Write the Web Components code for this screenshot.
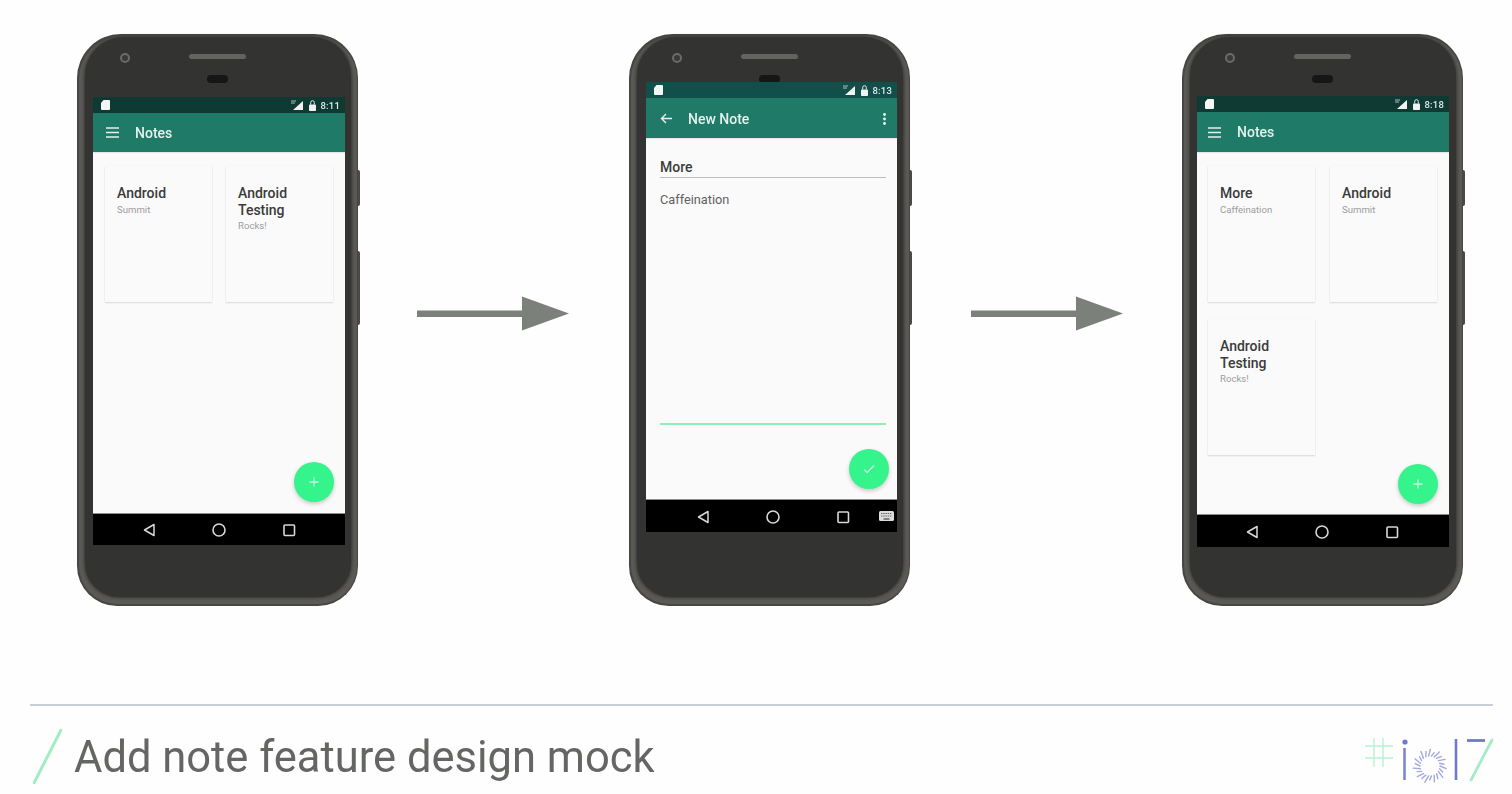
<!DOCTYPE html>
<html lang="en"><head><meta charset="utf-8"><title>Add note feature design mock</title>
<style>
html,body{margin:0;padding:0;background:#fefefe;height:794px;overflow:hidden;font-family:Roboto,"Liberation Sans",sans-serif}
</style></head><body>
<template id="t-slide">
<style>
:host{display:block;width:1512px;height:794px;overflow:hidden;filter:blur(.6px)}
.stage{display:grid;grid-template-columns:281px 271px 281px 272px 281px;justify-content:start;align-items:start;padding:34px 0 0 77px}
.foot{margin:97.500px 19px 0 30px;border-top:2px solid #c6cfda;display:flex;align-items:flex-start}
</style>
<div class="stage"><slot></slot></div>
<div class="foot"><slot name="footer"></slot></div>
</template>

<template id="t-phone">
<style>
:host{display:block;position:relative;width:281px;height:572px;box-sizing:border-box;border-radius:44px 44px 40px 40px;background:#474643;padding:var(--pt) 0 0 var(--pl)}
.ring{position:absolute;inset:1.500px 1.500px 2px;border-radius:43px 43px 38px 38px;background:#5a5955}
.in{position:absolute;inset:3px 7px 9px 8px;border-radius:39px 39px 34px 34px;background:#333332;box-shadow:0 0 3px 1px #383735}
.screen{position:relative;width:var(--sw);height:var(--sh);display:flex;flex-direction:column;overflow:hidden}
.cam{position:absolute;left:43px;top:19px;width:6px;height:6px;border:2px solid #6b6b67;border-radius:50%;background:#3a3a39}
.spk{position:absolute;left:112px;top:20px;width:57px;height:5px;border-radius:3px;background:#63635f}
.sensor{position:absolute;left:130px;top:41px;width:21px;height:8px;border-radius:4px;background:#161616}
.btn{position:absolute;right:-2px;width:2.500px;background:#4a4946;border-radius:0 2px 2px 0}
.b1{top:136px;height:36px}.b2{top:217px;height:74px}
</style>
<div class="ring"></div><div class="in"></div><div class="cam"></div><div class="spk"></div><div class="sensor"></div>
<div class="btn b1"></div><div class="btn b2"></div>
<div class="screen"><slot></slot></div>
</template>

<template id="t-status">
<style>
:host{display:flex;align-items:center;height:16px;background:var(--sb,#0e3a33);padding:0 5px 0 8px;flex:none}
svg{display:block}.sd{margin-right:auto}
span{font:500 9.500px Roboto,sans-serif;color:#dfe9e6;margin-left:4px;letter-spacing:.2px}
.l{margin-left:6px}
</style>
<svg class="sd" width="9" height="10" viewBox="0 0 9 10"><path d="M2.500 0H8a1 1 0 0 1 1 1v8a1 1 0 0 1-1 1H1a1 1 0 0 1-1-1V3z" fill="#f4f6f5"/></svg>
<svg width="12" height="10" viewBox="0 0 12 10"><path d="M12 1v9H2z" fill="#f0f3f2"/><path d="M0 .500h5v1H0zM0 2.500h4v1H0z" fill="#aebdb9"/></svg>
<svg class="l" width="7" height="11" viewBox="0 0 7 11"><path d="M1.700 4.500V2.500a1.800 1.800 0 0 1 3.600 0v2" fill="none" stroke="#e8eeec" stroke-width="1"/><rect y="4.500" width="7" height="6.500" rx=".8" fill="#f0f3f2"/></svg>
<span><slot></slot></span>
</template>

<template id="t-appbar">
<style>
:host{display:flex;align-items:center;height:var(--ab,39px);background:#1f7a68;flex:none;box-sizing:border-box;padding:var(--at,0) 11px 0 var(--al,13px);color:#e4f1ee;box-shadow:0 1px 1px rgba(0,0,0,.08);position:relative;z-index:1}
.t{font:500 14px Roboto,sans-serif;margin-left:var(--ag,16px);flex:1}
</style>
<slot name="icon"></slot><div class="t"><slot></slot></div><slot name="end"></slot>
</template>

<template id="t-content">
<style>
:host{display:block;position:relative;flex:1;min-height:0;background:#fafafa;box-sizing:border-box}
.grid{display:grid;grid-template-columns:107px 107px;gap:17px var(--gx,14px);padding:14px 0 0 var(--gl,12px)}
.fab{position:absolute;width:40px;height:40px;border-radius:50%;background:#35f48b;right:var(--fr,11px);bottom:var(--fb,12px);box-shadow:0 2px 4px rgba(0,0,0,.2);display:flex;align-items:center;justify-content:center}
</style>
<div class="grid"><slot></slot></div>
<div class="fab"><slot name="fab"></slot></div>
</template>

<template id="t-form">
<style>
:host{display:flex;flex-direction:column;position:relative;flex:1;min-height:0;background:#fafafa;padding:21px 11px 0 14px}
.t{font:500 14px/16px Roboto,sans-serif;color:#3c3c3c;padding-bottom:2px;border-bottom:1.500px solid #bdbdbb}
.b{font:400 12.750px/16px Roboto,sans-serif;color:#616161;margin-top:14px;height:231px;border-bottom:2px solid #8fefbb}
.fab{position:absolute;width:40px;height:40px;border-radius:50%;background:#35f48b;right:8px;bottom:11px;box-shadow:0 2px 4px rgba(0,0,0,.2);display:flex;align-items:center;justify-content:center}
</style>
<div class="t"><slot name="title"></slot></div>
<div class="b"><slot></slot></div>
<div class="fab"><slot name="fab"></slot></div>
</template>

<template id="t-card">
<style>
:host{display:block;height:136px;box-sizing:border-box;background:#fafafa;box-shadow:0 1px 1.500px rgba(0,0,0,.12),0 0 1px rgba(0,0,0,.08);padding:19px 11px 0 12px}
.h{font:500 14px/16.500px Roboto,sans-serif;color:#3a3a3a}
.s{font:400 9.600px/12px Roboto,sans-serif;color:#9c9c9c;margin-top:2px}
</style>
<div class="h"><slot name="h"></slot></div><div class="s"><slot></slot></div>
</template>

<template id="t-nav">
<style>
:host{display:flex;position:relative;height:var(--nv,31px);background:#000;flex:none;align-items:center;justify-content:center;gap:50px;padding:var(--nt,0) var(--nr,0) 0 var(--nl,0);box-shadow:0 -1px 0 #8d8d8d;z-index:1;box-sizing:border-box}
svg{display:block}
::slotted(*){position:absolute;right:3px;top:50%;margin-top:-5px}
</style>
<svg width="20" height="16" viewBox="0 0 20 16"><path d="M15 2.500V13.500L5.500 8z" fill="none" stroke="#d8d8d8" stroke-width="1.500" stroke-linejoin="round"/></svg>
<svg width="20" height="16" viewBox="0 0 20 16"><circle cx="10" cy="8" r="6" fill="none" stroke="#d8d8d8" stroke-width="1.600"/></svg>
<svg width="20" height="16" viewBox="0 0 20 16"><rect x="5" y="3" width="10.500" height="10.500" rx="1" fill="none" stroke="#d8d8d8" stroke-width="1.600"/></svg>
<slot></slot>
</template>

<template id="t-arrow">
<style>:host{display:block;width:152px;height:36px;margin:262px 0 0 var(--ml,59px)}svg{display:block}</style>
<svg width="152" height="36" viewBox="0 0 152 36"><path d="M0 14.500H105V.500L152 17.500 105 34.500V21H0z" fill="#7c807b"/></svg>
</template>

<template id="t-title">
<style>
:host{display:flex;flex:1;align-items:flex-start;padding-top:23px}
svg{display:block;margin:.500px 0 0 3px;flex:none}
.t{font:400 43.500px/52px Roboto,sans-serif;color:#636663;margin:3px 0 0 12px;white-space:nowrap}
</style>
<svg width="29" height="55" viewBox="0 0 29 55"><path d="M1 54 28 1" stroke="#a2ecc4" stroke-width="3" stroke-linecap="round"/></svg>
<div class="t"><slot></slot></div>
</template>

<template id="t-logo">
<style>:host{display:block;width:128px;height:44px;flex:none;margin-top:32px}svg{display:block;overflow:visible}</style>
<svg width="128" height="44" viewBox="0 0 128 44">
<path d="M9 0V29M18 0V29M0 8H28M0 20H28" stroke="#b6f1d2" stroke-width="1.400" fill="none"/>
<circle cx="40" cy="4" r="2.600" fill="#6e78cc"/><path d="M39.500 10V42" stroke="#7e86d2" stroke-width="2.600"/>
<g class="sp" stroke="#a4a9df" stroke-width="1.400" stroke-linecap="round"></g>
<path d="M91 1V42" stroke="#7079cd" stroke-width="2.600"/>
<path d="M102 2.500H120" stroke="#7079cd" stroke-width="2.800"/><path d="M127 2 106 42" stroke="#a5ecc4" stroke-width="2.800" stroke-linecap="round"/>
</svg>
</template>

<slide-page>
  <phone-device style="--pt:63px;--pl:16px;--sw:252px;--sh:448px">
    <status-bar>8:11</status-bar>
    <app-bar><svg slot="icon" width="13" height="11" viewBox="0 0 13 11"><path d="M0 1H13M0 5.500H13M0 10H13" stroke="#e4f1ee" stroke-width="1.500"/></svg>Notes</app-bar>
    <notes-list style="--gl:12px;--gx:14px;--fr:11px;--fb:12px">
      <note-card><span slot="h">Android</span>Summit</note-card>
      <note-card><span slot="h">Android Testing</span>Rocks!</note-card>
      <svg slot="fab" width="10" height="10" viewBox="0 0 10 10"><path d="M5 .500V9.500M.500 5H9.500" stroke="#c6fbdf" stroke-width="1.300"/></svg>
    </notes-list>
    <nav-bar></nav-bar>
  </phone-device>
  <flow-arrow style="--ml:59px"></flow-arrow>
  <phone-device style="--pt:48px;--pl:17px;--sw:251px;--sh:450px;--sb:#11504a;--ab:40px;--nv:32px;--nl:3px;--nt:1px;--at:1px;--al:14px;--ag:16px">
    <status-bar>8:13</status-bar>
    <app-bar><svg slot="icon" width="12" height="11" viewBox="0 0 12 11"><path d="M12 5.500H1.500M6 1 1.500 5.500 6 10" stroke="#e4f1ee" stroke-width="1.400" fill="none"/></svg>New Note<svg slot="end" width="3" height="12" viewBox="0 0 3 12"><circle cx="1.500" cy="1.500" r="1.400" fill="#eef6f4"/><circle cx="1.500" cy="6" r="1.400" fill="#eef6f4"/><circle cx="1.500" cy="10.500" r="1.400" fill="#eef6f4"/></svg></app-bar>
    <note-form>
      <span slot="title">More</span>Caffeination
      <svg slot="fab" width="12" height="10" viewBox="0 0 12 10"><path d="M1 5.500 4.200 8.500 11 1.500" stroke="#c6fbdf" stroke-width="1.300" fill="none"/></svg>
    </note-form>
    <nav-bar><svg width="15" height="10" viewBox="0 0 15 10"><rect width="15" height="10" rx="1.500" fill="#dcdcdc"/><path d="M2 2.500H13M2 5H13" stroke="#666" stroke-width="1" stroke-dasharray="1.500 .7"/><path d="M4.500 8H10.500" stroke="#444" stroke-width="1.200"/></svg></nav-bar>
  </phone-device>
  <flow-arrow style="--ml:61px"></flow-arrow>
  <phone-device style="--pt:62px;--pl:15px;--sw:252px;--sh:451px;--ab:40px;--nv:32px;--nr:2px;--nt:1px;--al:11px">
    <status-bar>8:18</status-bar>
    <app-bar><svg slot="icon" width="13" height="11" viewBox="0 0 13 11"><path d="M0 1H13M0 5.500H13M0 10H13" stroke="#e4f1ee" stroke-width="1.500"/></svg>Notes</app-bar>
    <notes-list style="--gl:11px;--gx:15px;--fr:11px;--fb:11px">
      <note-card><span slot="h">More</span>Caffeination</note-card>
      <note-card><span slot="h">Android</span>Summit</note-card>
      <note-card><span slot="h">Android Testing</span>Rocks!</note-card>
      <svg slot="fab" width="10" height="10" viewBox="0 0 10 10"><path d="M5 .500V9.500M.500 5H9.500" stroke="#c6fbdf" stroke-width="1.300"/></svg>
    </notes-list>
    <nav-bar></nav-bar>
  </phone-device>
  <slide-title slot="footer">Add note feature design mock</slide-title>
  <io-logo slot="footer"></io-logo>
</slide-page>
<script>
function mk(name,id,init){customElements.define(name,class extends HTMLElement{constructor(){super();const r=this.attachShadow({mode:'open'});r.appendChild(document.getElementById(id).content.cloneNode(true));if(init)init(r,this)}})}
mk('slide-page','t-slide');mk('phone-device','t-phone');mk('status-bar','t-status');mk('app-bar','t-appbar');
mk('notes-list','t-content');mk('note-form','t-form');mk('note-card','t-card');mk('nav-bar','t-nav');
mk('flow-arrow','t-arrow');mk('slide-title','t-title');
mk('io-logo','t-logo',r=>{const g=r.querySelector('.sp');const cx=65,cy=28;let s='';
 for(let i=0;i<22;i++){const a=i/22*Math.PI*2,ln=[16.500,14,17,15][i%4],r0=10,sk=.16;
  s+=`<line x1="${(cx+r0*Math.cos(a)).toFixed(1)}" y1="${(cy+r0*Math.sin(a)).toFixed(1)}" x2="${(cx+ln*Math.cos(a+sk)).toFixed(1)}" y2="${(cy+ln*Math.sin(a+sk)).toFixed(1)}"/>`}
 g.innerHTML=s});
</script>
</body></html>
